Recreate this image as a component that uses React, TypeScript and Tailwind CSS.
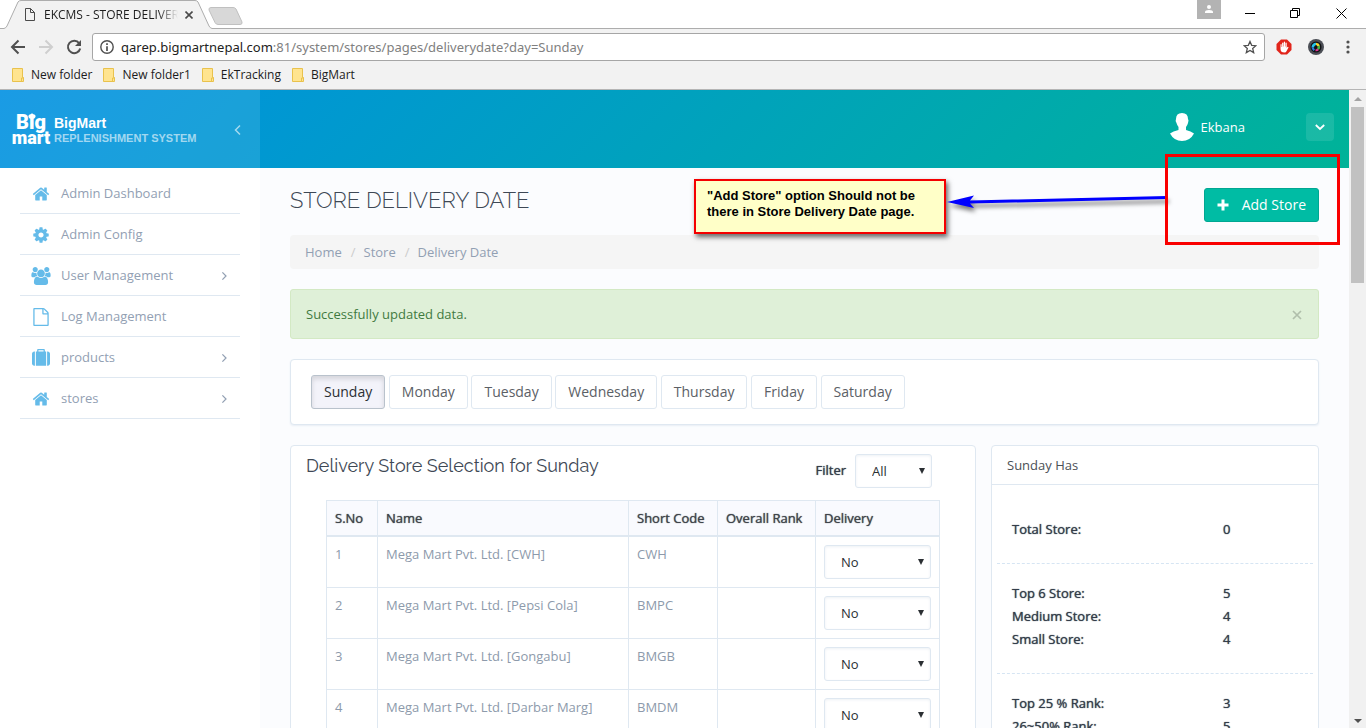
import React, { useState } from "react";

const HOME = "M1472 992v480q0 26-19 45t-45 19h-384v-384h-256v384h-384q-26 0-45-19t-19-45v-480q0-1 .5-3t.5-3l575-474 575 474q1 2 1 6zm223-69l-62 74q-8 9-21 11h-3q-13 0-21-7l-692-577-692 577q-12 8-24 7-13-2-21-11l-62-74q-8-10-7-23.5t11-21.5l719-599q32-26 76-26t76 26l244 204v-195q0-14 9-23t23-9h192q14 0 23 9t9 23v408l219 182q10 8 11 21.5t-7 23.5z";
const COG = "M1152 896q0-106-75-181t-181-75-181 75-75 181 75 181 181 75 181-75 75-181zm512-109v222q0 12-8 23t-20 13l-185 28q-19 54-39 91 35 50 107 138 10 12 10 25t-9 23q-27 37-99 108t-94 71q-12 0-26-9l-138-108q-44 23-91 38-16 136-29 186-7 28-36 28h-222q-14 0-24.5-8.5t-11.5-21.5l-28-184q-49-16-90-37l-141 107q-10 9-25 9-14 0-25-11-126-114-165-168-7-10-7-23 0-12 8-23 15-21 51-66.5t54-70.5q-27-50-41-99l-183-27q-13-2-21-12.5t-8-23.5v-222q0-12 8-23t19-13l186-28q14-46 39-92-40-57-107-138-10-12-10-24 0-10 9-23 26-36 98.5-107.5t94.5-71.5q13 0 26 10l138 107q44-23 91-38 16-136 29-186 7-28 36-28h222q14 0 24.5 8.5t11.5 21.5l28 184q49 16 90 37l142-107q9-9 24-9 13 0 25 10 129 119 165 170 7 8 7 22 0 12-8 23-15 21-51 66.5t-54 70.5q26 50 41 98l183 28q13 2 21 12.5t8 23.5z";
const FILE = "M1596 380q28 28 48 76t20 88v1152q0 40-28 68t-68 28h-1344q-40 0-68-28t-28-68v-1600q0-40 28-68t68-28h896q40 0 88 20t76 48zm-444-244v376h376q-10-29-22-41l-313-313q-12-12-41-22zm384 1528v-1024h-416q-40 0-68-28t-28-68v-416h-768v1536h1280z";
const SUITCASE = "M640 256h512v-128h-512v128zm-352 0v1408h-64q-92 0-158-66t-66-158v-960q0-92 66-158t158-66h64zm1120 0v1408h-1024v-1408h128v-160q0-40 28-68t68-28h576q40 0 68 28t28 68v160h128zm384 224v960q0 92-66 158t-158 66h-64v-1408h64q92 0 158 66t66 158z";
const USERS = "M593 896q-162 5-265 128h-134q-82 0-138-40.5t-56-118.5q0-353 124-353 6 0 43.5 21t97.5 42.5 119 21.5q67 0 133-23-5 37-5 66 0 139 81 256zm1071 637q0 120-73 189.5t-194 69.5h-874q-121 0-194-69.5t-73-189.5q0-53 3.5-103.5t14-109 26.5-108.5 43-97.5 62-81 85.5-53.5 111.5-20q10 0 43 21.5t73 48 107 48 135 21.5 135-21.5 107-48 73-48 43-21.5q61 0 111.5 20t85.5 53.5 62 81 43 97.5 26.5 108.5 14 109 3.5 103.5zm-1024-1277q0 106-75 181t-181 75-181-75-75-181 75-181 181-75 181 75 75 181zm704 384q0 159-112.5 271.5t-271.5 112.5-271.5-112.5-112.5-271.5 112.5-271.5 271.5-112.5 271.5 112.5 112.5 271.5zm576 225q0 78-56 118.5t-138 40.5h-134q-103-123-265-128 81-117 81-256 0-29-5-66 66 23 133 23 59 0 119-21.5t97.5-42.5 43.5-21q124 0 124 353zm-128-609q0 106-75 181t-181 75-181-75-75-181 75-181 181-75 181 75 75 181z";

const NAV = [
  { label: "Admin Dashboard", d: HOME, box: "0 0 1792 1792", expands: false },
  { label: "Admin Config", d: COG, box: "0 0 1792 1792", expands: false },
  { label: "User Management", d: USERS, box: "0 0 1920 1792", expands: true },
  { label: "Log Management", d: FILE, box: "0 0 1792 1792", expands: false },
  { label: "products", d: SUITCASE, box: "0 0 1792 1792", expands: true },
  { label: "stores", d: HOME, box: "0 0 1792 1792", expands: true },
];

const BOOKMARKS = ["New folder", "New folder1", "EkTracking", "BigMart"];

const DAYS = ["Sunday", "Monday", "Tuesday", "Wednesday", "Thursday", "Friday", "Saturday"];

const STORES = [
  { name: "Mega Mart Pvt. Ltd. [CWH]", code: "CWH" },
  { name: "Mega Mart Pvt. Ltd. [Pepsi Cola]", code: "BMPC" },
  { name: "Mega Mart Pvt. Ltd. [Gongabu]", code: "BMGB" },
  { name: "Mega Mart Pvt. Ltd. [Darbar Marg]", code: "BMDM" },
];

const STATS = [
  [["Total Store:", "0"]],
  [["Top 6 Store:", "5"], ["Medium Store:", "4"], ["Small Store:", "4"]],
  [["Top 25 % Rank:", "3"], ["26~50% Rank:", "5"]],
];

function Chevron({ className, d }: { className: string; d: string }) {
  return (
    <svg viewBox="0 0 10 10" className={className} fill="none" stroke="currentColor" strokeWidth="1.5" aria-hidden="true">
      <path d={d} />
    </svg>
  );
}

function TabStrip() {
  return (
    <div className="relative flex h-[29px] shrink-0 items-end bg-white">
      <div className="relative h-[29px] w-[212px] shrink-0">
        <svg viewBox="0 0 212 29" className="absolute inset-0 h-full w-full" aria-hidden="true">
          <path d="M0 28.5H4Q6 28 7 26L18 2Q19 .5 21 .5H195Q197 .5 198 2L209 26Q210 28 212 28.5V29H0Z" fill="#f2f2f2" />
          <path d="M0 28.5H4Q6 28 7 26L18 2Q19 .5 21 .5H195Q197 .5 198 2L209 26Q210 28 212 28.5" fill="none" stroke="#adadad" />
        </svg>
        <div className="relative flex h-full items-center pl-[25px]">
          <svg viewBox="0 0 10 13" className="h-[13px] w-[10px]" fill="none" stroke="#4a4a4a" aria-hidden="true">
            <path d="M.5.5h5l4 4v8h-9zM5.5.5v4h4" />
          </svg>
          <span className="ml-[9px] w-[134px] overflow-hidden whitespace-nowrap bg-linear-to-r from-[#1c1c1c] from-85% to-transparent bg-clip-text text-xs text-transparent">
            EKCMS - STORE DELIVER
          </span>
          <button type="button" aria-label="Close tab" className="ml-[7px]">
            <svg viewBox="0 0 8 8" className="h-2 w-2" stroke="#4a4a4a" strokeWidth="1.6">
              <path d="M.5.5l7 7M7.5.5l-7 7" />
            </svg>
          </button>
        </div>
      </div>
      <div className="h-[29px] flex-1 border-b border-[#adadad]">
        <svg viewBox="0 0 36 18" className="-ml-1 mt-[7px] h-[18px] w-9" aria-hidden="true">
          <path d="M3 .5H25Q27 .5 28 2L34 15Q34.500 17.500 32 17.500H10Q8 17.500 7 15.500L1 3Q.5.5 3 .5Z" fill="#d8d8d8" stroke="#c0c0c0" />
        </svg>
      </div>
      <div className="flex h-full border-b border-[#adadad]">
        <div className="mr-6 flex h-[19px] w-6 items-center justify-center bg-[#b3b3b3]">
          <svg viewBox="0 0 8 9" className="h-[9px] w-2" fill="#fff" aria-hidden="true">
            <circle cx="4" cy="2" r="2" />
            <path d="M0 8V7Q0 5 4 5T8 7V8Z" />
          </svg>
        </div>
        <div className="flex items-center gap-[35px] pr-[19px] pb-[2px] text-black">
          <button type="button" aria-label="Minimize"><svg viewBox="0 0 10 10" className="h-[10px] w-[10px]" stroke="currentColor"><path d="M0 5.500H10" /></svg></button>
          <button type="button" aria-label="Restore"><svg viewBox="0 0 11 11" className="h-[11px] w-[11px]" fill="none" stroke="currentColor"><path d="M.5 2.500h7v7h-7zM2.500 2.500v-2h7v7h-2" /></svg></button>
          <button type="button" aria-label="Close"><svg viewBox="0 0 11 11" className="h-[11px] w-[11px]" stroke="currentColor"><path d="M.5.5l10 10M10.500.5l-10 10" /></svg></button>
        </div>
      </div>
    </div>
  );
}

function Toolbar() {
  return (
    <div className="flex h-9 shrink-0 items-center bg-[#f2f2f2] pr-4 pl-[10px]">
      <button type="button" aria-label="Back">
        <svg viewBox="0 0 16 16" className="h-4 w-4" fill="none" stroke="#505050" strokeWidth="2"><path d="M15 8H2.500M8.500 1.500L2 8l6.500 6.500" /></svg>
      </button>
      <button type="button" aria-label="Forward" className="ml-3">
        <svg viewBox="0 0 16 16" className="h-4 w-4" fill="none" stroke="#cfcfcf" strokeWidth="2"><path d="M1 8h12.500M7.500 1.500L14 8l-6.500 6.500" /></svg>
      </button>
      <button type="button" aria-label="Reload" className="ml-3">
        <svg viewBox="0 0 16 16" className="h-4 w-4"><path d="M13.200 4.300A6.200 6.200 0 1 0 14.200 9.500" fill="none" stroke="#505050" strokeWidth="2" /><path d="M15 1v6H9Z" fill="#505050" /></svg>
      </button>
      <div className="ml-[10px] flex h-7 flex-1 items-center rounded-[3px] border border-[#a6a6a6] bg-white px-[7px]">
        <svg viewBox="0 0 14 14" className="h-[14px] w-[14px] shrink-0" aria-hidden="true">
          <circle cx="7" cy="7" r="6.200" fill="none" stroke="#505050" strokeWidth="1.400" />
          <path d="M7 3.200v1.700M7 6.200v4.800" stroke="#505050" strokeWidth="1.700" />
        </svg>
        <div className="ml-[7px] flex-1 pt-px font-['Noto_Sans',sans-serif] text-[13px] text-[#808080]">
          <span className="text-[#222]">qarep.bigmartnepal.com</span>:81/system/stores/pages/deliverydate?day=Sunday
        </div>
        <button type="button" aria-label="Bookmark this page">
          <svg viewBox="0 0 24 24" className="h-[14px] w-[14px]" fill="none" stroke="#505050" strokeWidth="2.200"><path d="M12 2.500l2.900 6.700 7.200.6-5.500 4.800 1.700 7.100L12 17.900l-6.300 3.800 1.700-7.100L1.900 9.800l7.200-.6z" /></svg>
        </button>
      </div>
      <button type="button" aria-label="Ad blocker" className="ml-[11px]">
        <svg viewBox="0 0 16 16" className="h-4 w-4">
          <path d="M5 .5h6L15.500 5v6L11 15.500H5L.5 11V5z" fill="#e1251b" />
          <path d="M4.500 8V5.500q.5-.9 1.100 0V8h.5V4q.6-.9 1.300 0v3.500h.4V3q.7-.9 1.300 0v4.500h.4V4q.7-.9 1.200 0V9l.7-1q.9-.4 1.100.4L10.600 12Q10 13.500 8.500 13.500 4.500 13.500 4.500 10z" fill="#fff" />
        </svg>
      </button>
      <button type="button" aria-label="Screen capture" className="ml-4">
        <svg viewBox="0 0 16 16" className="h-4 w-4">
          <circle cx="8" cy="8" r="8" fill="#4b4e55" />
          <circle cx="8" cy="8" r="5.500" fill="#101114" />
          <path d="M3.500 8Q4 4 8 3.800L8 6Q6 6.500 6 8.500Z" fill="#25c3e8" />
          <path d="M8 3.800Q11 3.800 12 6.500L9.500 7.500Q9 6 8 6Z" fill="#f0d232" />
          <path d="M3.500 8L6 8.500Q6 10 7 10.500L5.500 12Q3.600 10.500 3.500 8Z" fill="#2f7bd6" />
          <path d="M12 6.500Q12.600 9 11 11L9 9.500Q9.800 8.500 9.500 7.500Z" fill="#47b54a" />
          <path d="M9 9.500L11 11Q9.500 12.500 7.500 12.300L7.500 10.500Q8.500 10.500 9 9.500Z" fill="#e23595" />
        </svg>
      </button>
      <button type="button" aria-label="Browser menu" className="ml-[22px]">
        <svg viewBox="0 0 4 14" className="h-[14px] w-1" fill="#505050"><circle cx="2" cy="2" r="1.600" /><circle cx="2" cy="7" r="1.600" /><circle cx="2" cy="12" r="1.600" /></svg>
      </button>
    </div>
  );
}

function BookmarksBar() {
  return (
    <nav className="flex h-[25px] shrink-0 items-center gap-[11px] border-b border-[#b5b5b5] bg-[#f2f2f2] px-3 pb-1" aria-label="Bookmarks">
      {BOOKMARKS.map((name) => (
        <a key={name} href="#" className="flex items-center gap-[7px] text-xs text-[#1c1c1c]">
          <svg viewBox="0 0 12 14" className="h-[14px] w-3" aria-hidden="true">
            <path d="M.5.5h10v9h1v4H.5z" fill="#ffe48f" stroke="#e9c24d" />
            <path d="M9.500 13V10h2v3" fill="#ffe48f" stroke="#e9c24d" />
          </svg>
          {name}
        </a>
      ))}
    </nav>
  );
}

function Header() {
  return (
    <header className="flex h-[78px] shrink-0 bg-[linear-gradient(135deg,#0090e2_0%,#00b398_100%)] text-white">
      <div className="flex w-[260px] shrink-0 items-center bg-white/10 pt-px pr-[17px] pl-3">
        <a href="#" className="flex flex-1 items-center gap-1">
          <span className="relative flex w-[38px] flex-col items-center font-['Roboto',sans-serif] font-black">
            <span className="text-xl leading-[15px]">Big</span>
            <span className="text-lg leading-[15px]">mart</span>
            <svg viewBox="0 0 8 6" className="absolute top-[-2px] left-4 h-[6px] w-2" fill="#fff" aria-hidden="true">
              <path d="M4 0L5 1.200Q8 1.500 7.500 4 7 6 4 6T.5 4Q0 1.500 3 1.200Z" />
            </svg>
          </span>
          <span className="flex flex-col pt-[3px] font-['Liberation_Sans',sans-serif] font-bold">
            <span className="text-sm leading-[15px]">BigMart</span>
            <span className="text-[11px] leading-[15px] whitespace-nowrap text-white/60">REPLENISHMENT SYSTEM</span>
          </span>
        </a>
        <button type="button" aria-label="Collapse menu" className="text-white/60">
          <Chevron className="h-3 w-[10px]" d="M7 .5L2.500 5 7 9.500" />
        </button>
      </div>
      <div className="flex flex-1 items-center justify-end pr-[15px] pb-1">
        <svg viewBox="0 0 24 28" className="h-7 w-6" fill="#fff" aria-hidden="true">
          <path d="M12 0Q18 0 18 6 19 7 18 10 17.500 12 16 14V17Q21 18 24 20.500 20 28 12 28T0 20.500Q3 18 8.500 17V14Q7 12 6.500 10 5 8 6 6 6 0 12 0Z" />
        </svg>
        <span className="ml-[7px] pt-[2px] text-[13px]">Ekbana</span>
        <button type="button" aria-label="Account menu" className="ml-[61px] flex h-7 w-7 items-center justify-center rounded bg-white/10">
          <svg viewBox="0 0 10 10" className="h-[10px] w-[10px]" fill="none" stroke="currentColor" strokeWidth="1.800"><path d="M.8 3L5 7l4.200-4" /></svg>
        </button>
      </div>
    </header>
  );
}

function Sidebar() {
  return (
    <nav className="w-[260px] shrink-0 bg-white px-5 pt-[5px]" aria-label="Main">
      {NAV.map((item) => (
        <a key={item.label} href="#" className="flex h-[41px] items-center border-b border-[#dfe8f1] pt-[2px] pr-3 pl-[11px] text-[13px] text-[#92a0b3]">
          <span className="flex w-5 justify-center">
            <svg viewBox={item.box} className="h-[18px] w-5" fill="#65bbe9" aria-hidden="true"><path d={item.d} /></svg>
          </span>
          <span className="ml-[10px] flex-1">{item.label}</span>
          {item.expands && <Chevron className="h-2 w-2" d="M3 .5L7.500 5 3 9.500" />}
        </a>
      ))}
    </nav>
  );
}

function Select({ id, options, className, label }: { id: string; options: string[]; className: string; label?: string }) {
  return (
    <div className={className}>
      <select
        id={id}
        aria-label={label}
        className="h-[34px] w-full appearance-none rounded-[3px] border border-[#dfe8f1] bg-white px-4 pt-px text-[13px] text-[#2b2f33] shadow-[inset_0_1px_3px_#edf1f5]"
      >
        {options.map((o) => <option key={o}>{o}</option>)}
      </select>
      <svg viewBox="0 0 6 6" className="pointer-events-none absolute top-[14px] right-[7px] h-[6px] w-[6px]" fill="#2b2f33" aria-hidden="true"><path d="M0 0h6L3 6z" /></svg>
    </div>
  );
}

function StoreTable() {
  return (
    <table className="w-full border-collapse text-left text-[13px] leading-[18px]">
      <thead>
        <tr className="h-[35px] border-b-2 border-[#dfe8f1] bg-[#f9fafe] text-[#3f444a] [text-shadow:0_0_1px_currentColor]">
          <th className="w-[51px] border border-b-2 border-[#dfe8f1] px-2 font-medium">S.No</th>
          <th className="border border-b-2 border-[#dfe8f1] px-2 font-medium">Name</th>
          <th className="w-[89px] border border-b-2 border-[#dfe8f1] px-2 font-medium whitespace-nowrap">Short Code</th>
          <th className="w-[98px] border border-b-2 border-[#dfe8f1] px-2 font-medium whitespace-nowrap">Overall Rank</th>
          <th className="w-[124px] border border-b-2 border-[#dfe8f1] px-2 font-medium">Delivery</th>
        </tr>
      </thead>
      <tbody className="text-[#8d9aab]">
        {STORES.map((s, i) => (
          <tr key={s.code} className="align-top">
            <td className="border border-[#dfe8f1] p-2">{i + 1}</td>
            <td className="border border-[#dfe8f1] p-2">{s.name}</td>
            <td className="border border-[#dfe8f1] p-2">{s.code}</td>
            <td className="border border-[#dfe8f1] p-2" />
            <td className="border border-[#dfe8f1] p-2">
              <Select id={"delivery-" + s.code} label={"Delivery for " + s.code} options={["No", "Yes"]} className="relative" />
            </td>
          </tr>
        ))}
      </tbody>
    </table>
  );
}

function Stats() {
  return (
    <section className="w-[328px] shrink-0 rounded border border-[#dfe8f1] bg-white">
      <h3 className="flex h-[39px] items-center border-b border-[#dfe8f1] px-[15px] pt-[2px] text-[13px] text-[#4b5056]">Sunday Has</h3>
      <div className="px-[5px] pt-[14px]">
        {STATS.map((group, i) => (
          <dl key={i} className="border-b border-dashed border-[#d6e5f3] px-[15px] pt-[18px] pb-[22px] text-[13px] leading-[23px] font-medium text-[#333d4a] [text-shadow:0_0_1px_currentColor] first:pt-[19px]">
            {group.map(([k, v]) => (
              <div key={k} className="grid grid-cols-[211px_1fr]"><dt>{k}</dt><dd>{v}</dd></div>
            ))}
          </dl>
        ))}
      </div>
    </section>
  );
}

function Scrollbar() {
  return (
    <div className="flex w-[17px] shrink-0 flex-col items-center bg-[#f1f1f1] pt-[7px] pb-[5px]" aria-hidden="true">
      <svg viewBox="0 0 8 4" className="h-1 w-2" fill="#a3a3a3"><path d="M0 4L4 0l4 4z" /></svg>
      <div className="mt-[6px] h-[176px] w-[13px] bg-[#c1c1c1]" />
      <svg viewBox="0 0 8 4" className="mt-auto h-1 w-2" fill="#505050"><path d="M0 0l4 4 4-4z" /></svg>
    </div>
  );
}

function Annotation() {
  return (
    <div className="pointer-events-none absolute top-[63px] right-0 h-[100px] w-[668px]">
      <div className="absolute top-[26px] left-[13px] h-[55px] w-[252px] border-2 border-[#f40000] bg-[#ffffc8] px-[11px] pt-[7px] font-['Liberation_Sans',sans-serif] text-[13px] leading-4 font-bold text-black shadow-[2px_3px_5px_rgba(0,0,0,0.6)]">
        "Add Store" option Should not be there in Store Delivery Date page.
      </div>
      <svg viewBox="0 0 222 24" className="absolute top-[35px] left-[265px] h-6 w-[222px] drop-shadow-[2px_4px_2px_rgba(0,0,0,0.5)]" aria-hidden="true">
        <path d="M1 14L28 7.500 24 12.500 221 8V11L24 15.500 28 20Z" fill="#0000ff" />
      </svg>
      <div className="absolute top-[1px] left-[484px] h-[91px] w-[175px] border-3 border-[#f90000]" />
    </div>
  );
}

export default function App() {
  const [day, setDay] = useState("Sunday");
  const [notice, setNotice] = useState(true);
  return (
    <div className="flex h-screen flex-col overflow-hidden bg-white font-['Open_Sans',sans-serif]">
      <TabStrip />
      <Toolbar />
      <BookmarksBar />
      <div className="flex min-h-0 flex-1">
        <div className="relative flex min-w-0 flex-1 flex-col overflow-hidden">
          <Header />
          <div className="flex min-h-0 flex-1">
            <Sidebar />
            <main className="min-w-0 flex-1 overflow-hidden bg-[#fbfcfe] px-[30px] pt-5">
              <div className="flex h-[47px] items-start justify-between">
                <h1 className="font-['Raleway','Lato',sans-serif] text-[22px] leading-6 font-light text-[#3e4855]">STORE DELIVERY DATE</h1>
                <button type="button" className="flex h-[34px] items-center gap-[13px] rounded-[3px] border border-[#00a792] bg-[#00bca4] px-3 text-sm text-white">
                  <svg viewBox="0 0 12 12" className="h-3 w-3" fill="#fff" aria-hidden="true"><path d="M4.500.5h3v4h4v3h-4v4h-3v-4h-4v-3h4z" /></svg>
                  Add Store
                </button>
              </div>
              <ol className="flex h-[34px] items-center rounded bg-[#f5f5f5] px-[15px] pt-[2px] text-[13px] text-[#92a0b3]">
                <li><a href="#">Home</a></li>
                <li className="pr-2 pl-[9px] text-[#ccc]" aria-hidden="true">/</li>
                <li><a href="#">Store</a></li>
                <li className="pr-2 pl-[9px] text-[#ccc]" aria-hidden="true">/</li>
                <li>Delivery Date</li>
              </ol>
              {notice && (
                <div role="status" className="mt-5 flex h-[50px] items-center justify-between rounded-[3px] border border-[#d3e9c4] bg-[#dff0d8] px-[15px] pt-[2px] text-[13px] text-[#3f7a41]">
                  Successfully updated data.
                  <button type="button" aria-label="Dismiss" onClick={() => setNotice(false)} className="pr-px">
                    <svg viewBox="0 0 10 10" className="h-[10px] w-[10px]" stroke="#b0bfab" strokeWidth="1.700"><path d="M1 1l8 8M9 1l-8 8" /></svg>
                  </button>
                </div>
              )}
              <div className="mt-5 rounded border border-[#dfe8f1] bg-white px-5 py-[15px] text-sm leading-[34px] shadow-[0_1px_2px_#e8eef5]">
                {DAYS.map((d) => (
                  <React.Fragment key={d}>
                    <button
                      type="button"
                      onClick={() => setDay(d)}
                      className={
                        d === day
                          ? "h-[34px] rounded-[3px] border border-[#b9c2cc] bg-[#f3f3fa] px-3 align-top leading-5 text-[#2b2f33] shadow-[inset_0_3px_5px_rgba(0,0,0,0.125)]"
                          : "h-[34px] rounded-[3px] border border-[#dfe8f1] bg-white px-3 align-top leading-5 text-[#5b6066]"
                      }
                    >
                      {d}
                    </button>{" "}
                  </React.Fragment>
                ))}
              </div>
              <div className="mt-5 flex items-start gap-[15px]">
                <section className="min-w-0 flex-1 rounded border border-[#dfe8f1] bg-white pt-2 pr-[35px] pl-[35px]">
                  <div className="-ml-5 flex h-[46px] items-start justify-between pr-2">
                    <h2 className="font-['Raleway','Lato',sans-serif] text-lg leading-6 text-[#3e4855]">Delivery Store Selection for Sunday</h2>
                    <div className="flex items-center gap-[9px]">
                      <label htmlFor="filter" className="text-[13px] font-medium text-[#333d4a] [text-shadow:0_0_1px_currentColor]">Filter</label>
                      <Select id="filter" options={["All", "Yes", "No"]} className="relative w-[77px]" />
                    </div>
                  </div>
                  <StoreTable />
                </section>
                <Stats />
              </div>
            </main>
          </div>
          <Annotation />
        </div>
        <Scrollbar />
      </div>
    </div>
  );
}
